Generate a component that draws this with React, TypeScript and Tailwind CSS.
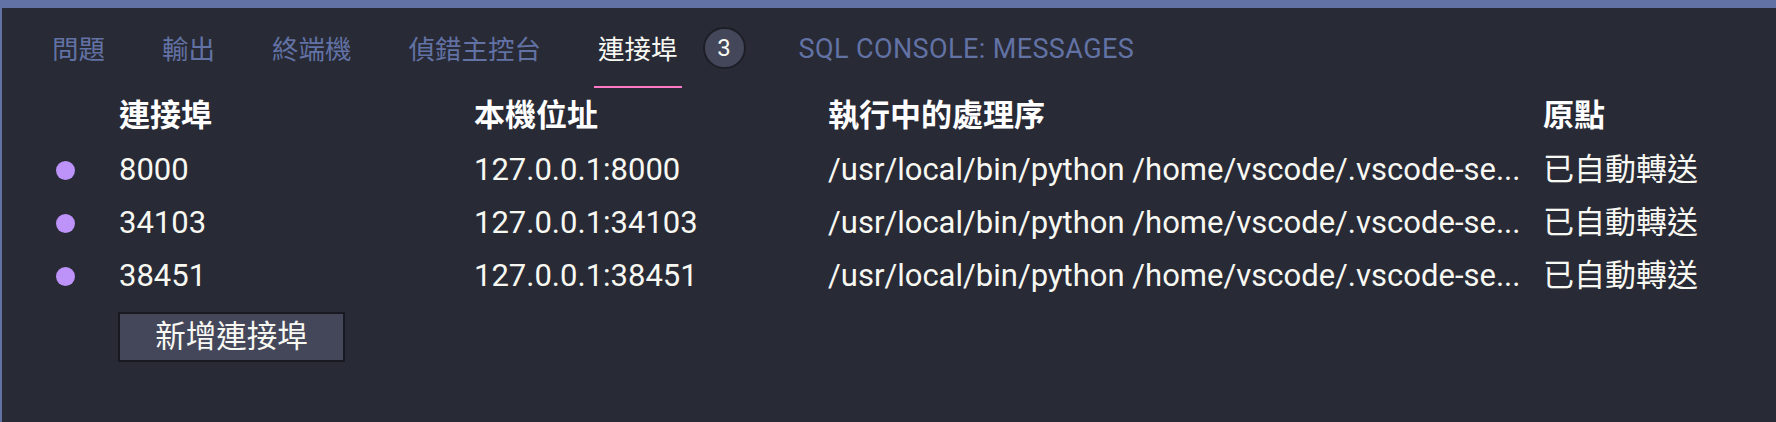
import React from "react";

const LATIN = "font-['Roboto','Noto_Sans_CJK_TC',sans-serif]";

type Tab = { label: string; active?: boolean; badge?: string; latin?: boolean };

const tabs: Tab[] = [
  { label: "問題" },
  { label: "輸出" },
  { label: "終端機" },
  { label: "偵錯主控台" },
  { label: "連接埠", active: true, badge: "3" },
  { label: "SQL CONSOLE: MESSAGES", latin: true },
];

const rows = [
  { port: "8000", addr: "127.0.0.1:8000" },
  { port: "34103", addr: "127.0.0.1:34103" },
  { port: "38451", addr: "127.0.0.1:38451" },
];

const PROC = "/usr/local/bin/python /home/vscode/.vscode-se...";

export default function App() {
  return (
    <div className={`w-full h-[422px] overflow-hidden bg-[#282a36] border-t-[8px] border-l-2 border-[#6272a4] ${LATIN}`}>
      {/* Tabs */}
      <div className="flex h-[80px] items-stretch pl-[46px] gap-[49px]">
        {tabs.map((t) => (
          <div key={t.label} className="flex items-center">
            <div
              className={`h-full flex items-center px-[4px] ${
                t.active ? "text-[#f8f8f2] shadow-[inset_0_-2px_0_#ff79c6]" : "text-[#6272a4]"
              } ${t.latin ? "text-[27px] tracking-[0.4px]" : "text-[26.5px]"}`}
            >
              <span className="pt-[3px]">{t.label}</span>
            </div>
            {t.badge && (
              <div className="ml-[21px] w-[43px] h-[42px] rounded-full bg-[#44475a] border-2 border-[#1d1e26] flex items-center justify-center text-[24px] text-[#f8f8f2]">
                {t.badge}
              </div>
            )}
          </div>
        ))}
      </div>

      {/* Table */}
      <div className="text-[31px] text-[#f8f8f2] pt-[1px]">
        <div className="grid grid-cols-[117px_355px_354px_715px_1fr] h-[55px] items-center font-bold text-white">
          <div />
          <div>連接埠</div>
          <div>本機位址</div>
          <div>執行中的處理序</div>
          <div>原點</div>
        </div>
        {rows.map((r) => (
          <div key={r.port} className="grid grid-cols-[117px_355px_354px_715px_1fr] h-[53px] items-center">
            <div className="pl-[54px] flex items-center">
              <div className="w-[19px] h-[19px] rounded-full bg-[#bd93f9]" />
            </div>
            <div>{r.port}</div>
            <div>{r.addr}</div>
            <div className="whitespace-nowrap">{PROC}</div>
            <div className="whitespace-nowrap">已自動轉送</div>
          </div>
        ))}
        <div className="pl-[116px] pt-[9px]">
          <button className="w-[227px] h-[50px] bg-[#44475a] border-2 border-[#191a21] text-[30.5px] text-[#f8f8f2] flex items-center justify-center leading-none">
            新增連接埠
          </button>
        </div>
      </div>
    </div>
  );
}
